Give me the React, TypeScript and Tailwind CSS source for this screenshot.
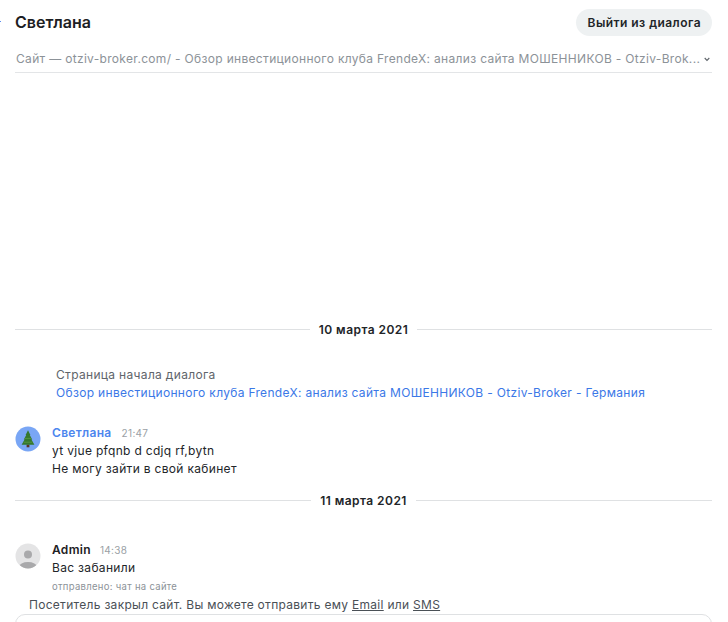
const font = { fontFamily: "Inter, 'Noto Sans', sans-serif" };

const DateDivider = ({ label }: { label: string }) => (
  <div className="flex items-center gap-[9px] h-[18px]">
    <div className="flex-1 h-px bg-[#dfe1e3]" />
    <span className="mt-[2px] text-[12px] tracking-[0.45px] leading-[18px] font-semibold text-[#222529]">{label}</span>
    <div className="flex-1 h-px bg-[#dfe1e3]" />
  </div>
);

const TreeAvatar = () => (
  <svg width="26" height="26" viewBox="0 0 26 26" className="shrink-0">
    <circle cx="13" cy="13" r="12.5" fill="#79a6f5" />
    <rect x="11.6" y="18.5" width="2.8" height="2.8" fill="#5b3524" />
    <path d="M13 4.2 15.4 9 14.8 9 17.2 13.4 16.4 13.4 19.4 18.8 6.6 18.8 9.6 13.4 8.8 13.4 11.2 9 10.6 9Z" fill="#35782f" />
    <path d="M10 12.4 16 12.4M8.6 16.2 17.4 16.2" stroke="#5b9a45" strokeWidth="0.8" />
  </svg>
);

const UserAvatar = () => (
  <svg width="26" height="26" viewBox="0 0 26 26" className="shrink-0">
    <defs>
      <clipPath id="avatarClip">
        <circle cx="13" cy="13" r="12.5" />
      </clipPath>
    </defs>
    <circle cx="13" cy="13" r="12.5" fill="#e4e4e5" />
    <circle cx="13" cy="11.5" r="4" fill="#a9a9ab" />
    <ellipse cx="13" cy="24" rx="9" ry="5" fill="#a9a9ab" clipPath="url(#avatarClip)" />
  </svg>
);

export default function App() {
  return (
    <div style={font} className="relative w-[728px] h-[622px] overflow-hidden bg-white pl-[15px] pr-4 text-[#222529] text-[12px] tracking-[0.32px]">
      <span className="absolute left-0 top-[21px] w-px h-px bg-[#5b8def]" />

      <header className="flex items-center justify-between pt-[9px]">
        <h1 className="text-[16px] leading-[27px] font-semibold tracking-normal text-[#1d2023]">Светлана</h1>
        <button className="h-[27px] pl-[11.5px] pr-[11px] rounded-full bg-[#eef1f2] font-semibold tracking-[0.45px] text-[#222529]">
          Выйти из диалога
        </button>
      </header>

      <div className="flex items-center justify-between mt-[12px] h-[25px] pb-[2px] pl-px border-b border-[#e3e5e7] text-[#8c9298]">
        <span className="whitespace-nowrap">
          Сайт — otziv-broker.com/ - Обзор инвестиционного клуба FrendeX: анализ сайта МОШЕННИКОВ - Otziv-Brok...
        </span>
        <svg width="6" height="5" viewBox="0 0 6 5" className="shrink-0 mr-[2px]">
          <path d="M.7 1 3 3.4 5.3 1" fill="none" stroke="#5f656b" strokeWidth="1.1" />
        </svg>
      </div>

      <div className="mt-[247px]">
        <DateDivider label="10 марта 2021" />
      </div>

      <div className="mt-[28px] pl-[41px] leading-[18px]">
        <div className="text-[#5f656b]">Страница начала диалога</div>
        <div className="text-[#3b78e7]">
          Обзор инвестиционного клуба FrendeX: анализ сайта МОШЕННИКОВ - Otziv-Broker - Германия
        </div>
      </div>

      <div className="flex gap-[11px] mt-[22px]">
        <div className="pt-[2px]">
          <TreeAvatar />
        </div>
        <div className="leading-[18px]">
          <div className="flex items-baseline gap-[10px]">
            <span className="font-semibold text-[#4d86ee]">Светлана</span>
            <span className="text-[10px] text-[#9a9fa5]">21:47</span>
          </div>
          <div>yt vjue pfqnb d cdjq rf,bytn</div>
          <div>Не могу зайти в свой кабинет</div>
        </div>
      </div>

      <div className="mt-[13px]">
        <DateDivider label="11 марта 2021" />
      </div>

      <div className="flex gap-[11px] mt-[32px]">
        <div className="pt-[2px]">
          <UserAvatar />
        </div>
        <div className="leading-[18px]">
          <div className="flex items-baseline gap-[9px]">
            <span className="font-semibold text-[#1d2023]">Admin</span>
            <span className="text-[10px] text-[#9a9fa5]">14:38</span>
          </div>
          <div>Вас забанили</div>
          <div className="mt-[3px] text-[9.5px] tracking-[0.3px] leading-[14px] text-[#8c9298]">отправлено: чат на сайте</div>
        </div>
      </div>

      <div className="pl-[14px] mt-[2px] leading-[18px] tracking-[0.29px] text-[#4a5056]">
        Посетитель закрыл сайт. Вы можете отправить ему <a className="underline">Email</a> или <a className="underline">SMS</a>
      </div>

      <div className="absolute left-[15px] right-4 top-[614px] h-[40px] rounded-[10px] border border-[#dfe1e3] bg-white" />
    </div>
  );
}
